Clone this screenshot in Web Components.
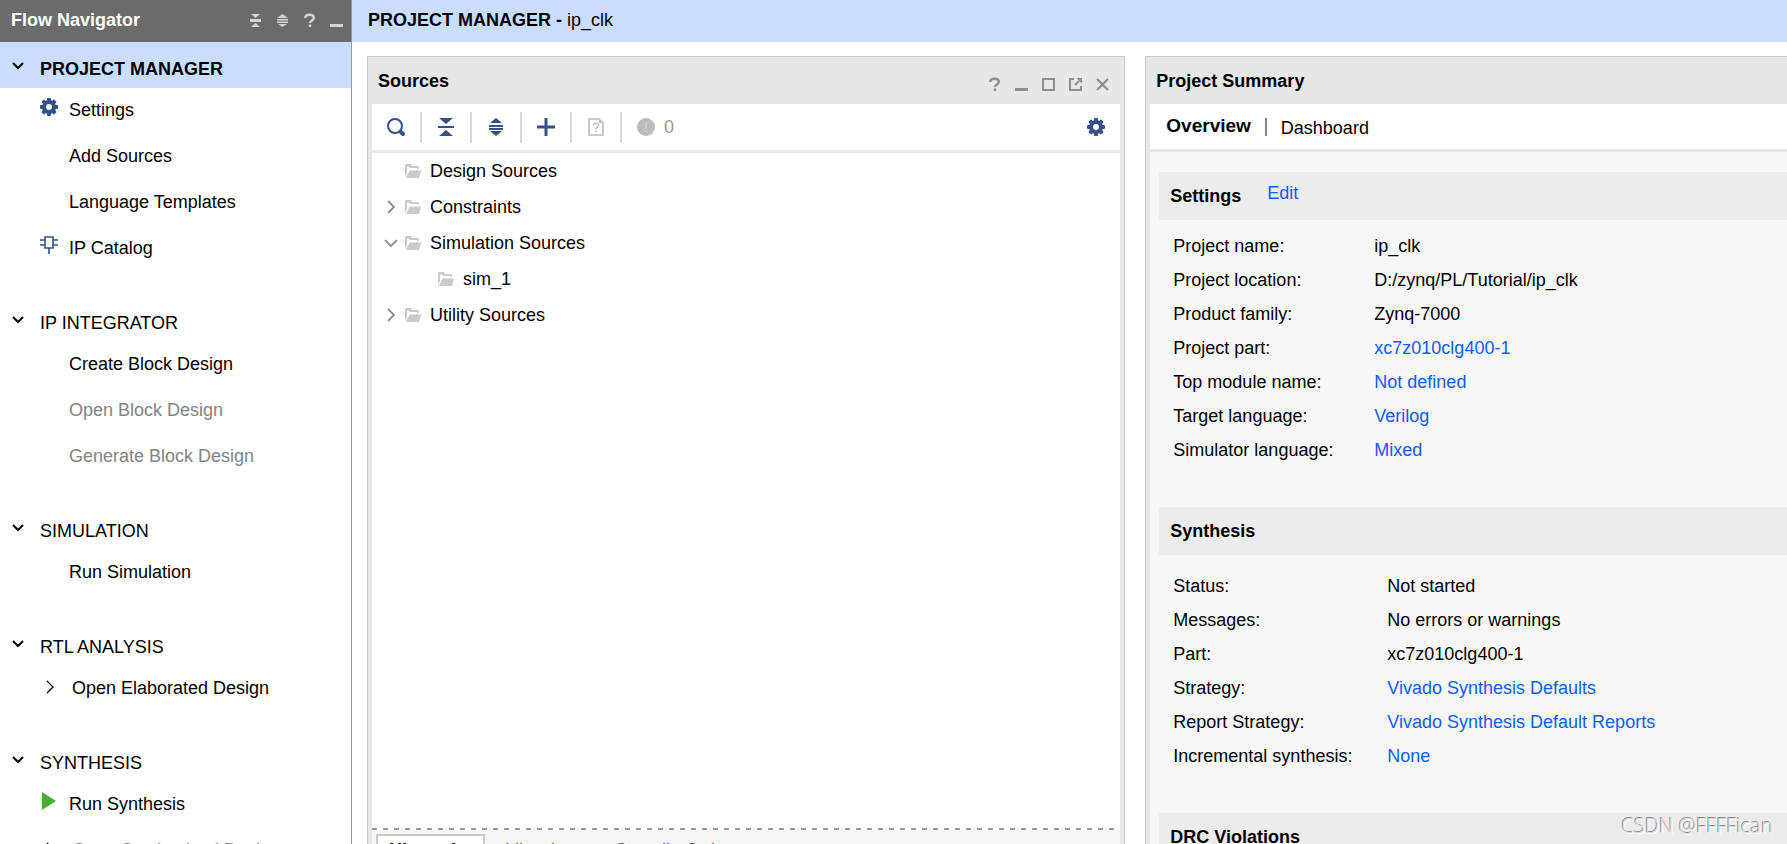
<!DOCTYPE html>
<html lang="en">
<head>
<meta charset="utf-8">
<meta name="viewport" content="width=device-width, initial-scale=1">
<title>ip_clk - Project Manager</title>
<style>
    html, body {
        margin: 0;
        height: 100%;
        overflow: hidden;
        background: #ffffff;
        color: #000000;
        font-family: "Liberation Sans", Arial, sans-serif;
        font-size: 18px;
        line-height: 22px;
    }
</style>
</head>
<body>

<ide-app></ide-app>

<script>
// ╔══════════════════════════════════════════════════════════╗
// ║                          ICONS                           ║
// ╚══════════════════════════════════════════════════════════╝
const teeth = [0, 45, 90, 135, 180, 225, 270, 315]
    .map(a => `<rect x="7" y="0" width="4" height="5" rx="1" transform="rotate(${a} 9 9)"/>`)
    .join('');

const icons = {
    gear: [18, 18, `${teeth}<circle cx="9" cy="9" r="5" fill="none" stroke="currentColor" stroke-width="4"/>`],
    chip: [18, 18, `<path d="M5 1h8v11H5zM0 4h5M0 9h5M13 4h5M13 9h5M9 12v6" fill="none" stroke="currentColor" stroke-width="1.6"/>`],
    play: [18, 18, `<path d="M2 0l14 9-14 9z"/>`],
    down: [12, 8, `<path d="M1 1l5 5 5-5" fill="none" stroke="currentColor" stroke-width="2"/>`],
    downThin: [14, 8, `<path d="M1 1l6 6 6-6" fill="none" stroke="currentColor" stroke-width="1.8"/>`],
    right: [18, 14, `<path d="M7 1l6 6-6 6" fill="none" stroke="currentColor" stroke-width="1.3"/>`],
    rightThin: [14, 14, `<path d="M4 1l6 6-6 6" fill="none" stroke="currentColor" stroke-width="1.8"/>`],
    collapse: [16, 18, `<path d="M1 0h14L8 6zM0 8h16v2H0zM1 18h14L8 12z"/>`],
    expand: [16, 18, `<path d="M2 5l6-5 6 5zM1 7h14v2H1zM1 10h14v2H1zM2 13l6 5 6-5z"/>`],
    collapseSmall: [13, 15, `<path d="M2 1h9L6.5 5zM1 6h11v3H1zM2 14h9l-4.5-4z"/>`],
    expandSmall: [13, 15, `<path d="M1 5l5.5-4L12 5zM1 6h11v1.5H1zM1 8.5h11V10H1zM2 11l4.5 3L11 11z"/>`],
    help: [13, 15, `<path d="M2.2 5C2.2 2.600 4 1.800 6.500 1.800S10.800 3 10.800 5c0 2.500-3.800 2.300-3.800 5" fill="none" stroke="currentColor" stroke-width="2.4"/><path d="M5.700 11.500h2.600V14H5.700z"/>`],
    minimize: [13, 15, `<path d="M0 11h13v3H0z"/>`],
    maximize: [13, 15, `<path d="M1 2h11v11H1z" fill="none" stroke="currentColor" stroke-width="2"/>`],
    popout: [13, 15, `<path d="M5 2H1v11h11V9M6 8l4-4" fill="none" stroke="currentColor" stroke-width="2"/><path d="M7.500 1H13v5.500z"/>`],
    close: [13, 15, `<path d="M1 2l11 11M12 2L1 13" fill="none" stroke="currentColor" stroke-width="2.2"/>`],
    search: [18, 18, `<circle cx="8" cy="8" r="7" fill="none" stroke="currentColor" stroke-width="2"/><path d="M14 14l2 2" stroke="currentColor" stroke-width="4" stroke-linecap="round"/>`],
    plus: [18, 18, `<path d="M0 7.500h18v3H0zM7.500 0h3v18h-3z"/>`],
    fileHelp: [16, 18, `<path d="M1 1h10l4 4v12H1z" fill="none" stroke="currentColor" stroke-width="1.6"/><path d="M11 1v4h4z"/><path d="M5.500 7.500C5.500 5.800 6.500 5.200 8 5.200s2.600.8 2.600 2.100c0 1.600-2.600 1.700-2.600 4" fill="none" stroke="currentColor" stroke-width="1.5"/><path d="M7.200 12.500h1.700v1.700H7.200z"/>`],
    alert: [18, 18, `<circle cx="9" cy="9" r="9"/><path d="M8 4h2v7H8zM8 12h2v2H8z" fill="#cdcdcd"/>`],
    folder: [16, 14, `<path d="M0 13V1l1-1h5l1 2h7v3h-1.500V4H5L4 2.500H2V9z"/><path d="M4.500 6.500H16L14 14H1z"/>`]
};

class IdeIcon extends HTMLElement {
    constructor() {
        super();
        this.attachShadow({ mode: "open" });
    }

    connectedCallback() {
        const [w, h, shape] = icons[this.getAttribute("name")];
        this.shadowRoot.innerHTML = /* html */`
            <style>
                :host { display: inline-flex; flex: none; }
                svg { display: block; fill: currentColor; }
            </style>
            <svg width="${w}" height="${h}" viewBox="0 0 ${w} ${h}" aria-hidden="true">${shape}</svg>
        `;
    }
}
customElements.define("ide-icon", IdeIcon);


// ╔══════════════════════════════════════════════════════════╗
// ║                       ICON BUTTON                        ║
// ╚══════════════════════════════════════════════════════════╝
class IconButton extends HTMLElement {
    constructor() {
        super();
        this.attachShadow({ mode: "open" });
    }

    connectedCallback() {
        this.shadowRoot.innerHTML = /* html */`
            <style>
                :host { display: flex; }
                button {
                    display: flex;
                    flex: 1;
                    align-items: center;
                    justify-content: center;
                    padding: 0;
                    border: 0;
                    background: none;
                    color: inherit;
                    font: inherit;
                }
            </style>
            <button type="button" aria-label="${this.getAttribute("label")}">
                <ide-icon name="${this.getAttribute("icon")}"></ide-icon>
            </button>
        `;
    }
}
customElements.define("icon-button", IconButton);


// ╔══════════════════════════════════════════════════════════╗
// ║                     FLOW NAVIGATOR                       ║
// ╚══════════════════════════════════════════════════════════╝
class FlowItem extends HTMLElement {
    constructor() {
        super();
        this.attachShadow({ mode: "open" });
    }

    connectedCallback() {
        const icon = this.getAttribute("icon");
        this.shadowRoot.innerHTML = /* html */`
            <style>
                :host { display: block; }
                button {
                    display: flex;
                    align-items: center;
                    gap: 11px;
                    box-sizing: border-box;
                    width: 100%;
                    height: 46px;
                    padding: 0 0 2px 40px;
                    border: 0;
                    background: none;
                    color: inherit;
                    font: inherit;
                    text-align: left;
                    white-space: nowrap;
                }
                button:disabled { color: #848484; }
                .icon { display: flex; width: 18px; padding-bottom: 6px; color: #34508a; }
                :host([icon="play"]) .icon { color: #43b02a; }
                :host([icon="right"]) button { gap: 14px; }
                :host([icon="right"]) .icon { padding-bottom: 2px; color: #000000; }
            </style>
            <button type="button" ${this.hasAttribute("disabled") ? "disabled" : ""}>
                <span class="icon">${icon ? `<ide-icon name="${icon}"></ide-icon>` : ""}</span>
                <slot></slot>
            </button>
        `;
    }
}
customElements.define("flow-item", FlowItem);

class FlowSection extends HTMLElement {
    constructor() {
        super();
        this.attachShadow({ mode: "open" });
        this.shadowRoot.innerHTML = /* html */`
            <style>
                :host { display: block; padding-bottom: 24px; }
                h2 { margin: 0; font: inherit; }
                button {
                    display: flex;
                    align-items: center;
                    gap: 16px;
                    box-sizing: border-box;
                    width: 100%;
                    height: 46px;
                    padding: 8px 0 0 12px;
                    border: 0;
                    background: none;
                    color: inherit;
                    font: inherit;
                    text-align: left;
                }
                ide-icon { padding-bottom: 6px; }
                :host([active]) button { background: #cbddff; font-weight: bold; }
            </style>
            <h2><button type="button" aria-expanded="true"><ide-icon name="down"></ide-icon>${this.getAttribute("heading")}</button></h2>
            <slot></slot>
        `;
    }
}
customElements.define("flow-section", FlowSection);

class FlowNavigator extends HTMLElement {
    constructor() {
        super();
        this.attachShadow({ mode: "open" });
        this.shadowRoot.innerHTML = /* html */`
            <style>
                :host {
                    display: block;
                    border-right: 1px solid #999999;
                    background: #ffffff;
                }
                header {
                    display: flex;
                    align-items: center;
                    box-sizing: border-box;
                    height: 42px;
                    padding: 0 1px 2px 11px;
                    background: #6b6b6b;
                    color: #ffffff;
                }
                h1 { flex: 1; margin: 0; font-size: 18px; }
                icon-button { width: 27px; color: #d4d4d4; }
            </style>
            <header>
                <h1>Flow Navigator</h1>
                <icon-button icon="collapseSmall" label="Collapse all"></icon-button>
                <icon-button icon="expandSmall" label="Expand all"></icon-button>
                <icon-button icon="help" label="Help"></icon-button>
                <icon-button icon="minimize" label="Minimize"></icon-button>
            </header>
            <nav>
                <flow-section heading="PROJECT MANAGER" active>
                    <flow-item icon="gear">Settings</flow-item>
                    <flow-item>Add Sources</flow-item>
                    <flow-item>Language Templates</flow-item>
                    <flow-item icon="chip">IP Catalog</flow-item>
                </flow-section>
                <flow-section heading="IP INTEGRATOR">
                    <flow-item>Create Block Design</flow-item>
                    <flow-item disabled>Open Block Design</flow-item>
                    <flow-item disabled>Generate Block Design</flow-item>
                </flow-section>
                <flow-section heading="SIMULATION">
                    <flow-item>Run Simulation</flow-item>
                </flow-section>
                <flow-section heading="RTL ANALYSIS">
                    <flow-item icon="right">Open Elaborated Design</flow-item>
                </flow-section>
                <flow-section heading="SYNTHESIS">
                    <flow-item icon="play">Run Synthesis</flow-item>
                    <flow-item icon="right" disabled>Open Synthesized Design</flow-item>
                </flow-section>
            </nav>
        `;
    }
}
customElements.define("flow-navigator", FlowNavigator);


// ╔══════════════════════════════════════════════════════════╗
// ║                       DOCKED PANEL                       ║
// ╚══════════════════════════════════════════════════════════╝
class DockPanel extends HTMLElement {
    constructor() {
        super();
        this.attachShadow({ mode: "open" });
        this.shadowRoot.innerHTML = /* html */`
            <style>
                :host {
                    display: flex;
                    flex-direction: column;
                    min-width: 0;
                    padding: 0 4px 4px;
                    border: 1px solid #cacaca;
                    background: #e7e7e7;
                }
                header {
                    display: flex;
                    align-items: center;
                    flex: none;
                    height: 47px;
                    padding: 0 4px 0 6px;
                }
                h2 { flex: 1; margin: 0; font-size: 18px; white-space: nowrap; }
                .actions { display: flex; padding-top: 8px; color: #8e8e8e; }
                ::slotted(icon-button) { width: 27px; }
                .body { display: flex; flex: 1; flex-direction: column; min-height: 0; }
            </style>
            <header>
                <h2>${this.getAttribute("heading")}</h2>
                <div class="actions"><slot name="actions"></slot></div>
            </header>
            <div class="body"><slot></slot></div>
        `;
    }
}
customElements.define("dock-panel", DockPanel);


// ╔══════════════════════════════════════════════════════════╗
// ║                         SOURCES                          ║
// ╚══════════════════════════════════════════════════════════╝
class TreeRow extends HTMLElement {
    constructor() {
        super();
        this.attachShadow({ mode: "open" });
        const twisty = this.getAttribute("twisty");
        this.shadowRoot.innerHTML = /* html */`
            <style>
                :host {
                    display: flex;
                    align-items: center;
                    height: 36px;
                    padding-left: 12px;
                }
                :host([nested]) { padding-left: 45px; }
                .twisty { display: flex; width: 14px; margin-right: 7px; color: #8e8e8e; }
                .folder { margin-right: 9px; color: #cbcbcb; }
            </style>
            <span class="twisty">${twisty ? `<ide-icon name="${twisty}"></ide-icon>` : ""}</span>
            <ide-icon class="folder" name="folder"></ide-icon>
            <slot></slot>
        `;
    }

    connectedCallback() {
        this.setAttribute("role", "treeitem");
    }
}
customElements.define("tree-row", TreeRow);

class SourcesView extends HTMLElement {
    constructor() {
        super();
        this.attachShadow({ mode: "open" });
        this.shadowRoot.innerHTML = /* html */`
            <style>
                :host { display: flex; flex: 1; flex-direction: column; min-height: 0; }
                .toolbar {
                    display: flex;
                    align-items: center;
                    height: 46px;
                    border-bottom: 3px solid #e7e7e7;
                    background: #ffffff;
                    color: #34508a;
                }
                .toolbar icon-button { width: 48px; height: 31px; }
                .toolbar .ruled { border-right: 2px solid #dadada; }
                .toolbar .muted { color: #bcbcbc; }
                .count {
                    display: flex;
                    flex: 1;
                    align-items: center;
                    gap: 9px;
                    padding-left: 15px;
                    color: #999999;
                }
                .tree { flex: 1; min-height: 0; overflow: hidden; background: #ffffff; }
                .rule {
                    height: 2px;
                    background: repeating-linear-gradient(to right, #999999 0 5px, #ffffff 5px 11px);
                }
                .tabs {
                    display: flex;
                    align-items: stretch;
                    height: 34px;
                    padding: 4px 4px 0;
                    background: #f6f6f6;
                }
                .tabs button {
                    padding: 0 20px 3px;
                    border: 0;
                    background: none;
                    color: #555555;
                    font: inherit;
                }
                .tabs button[aria-selected="true"] {
                    padding: 0 11px 3px;
                    border: 2px solid #cacaca;
                    background: #ffffff;
                    color: #000000;
                    font-weight: bold;
                }
            </style>
            <div class="toolbar">
                <icon-button class="ruled" icon="search" label="Search"></icon-button>
                <icon-button class="ruled" icon="collapse" label="Collapse all"></icon-button>
                <icon-button class="ruled" icon="expand" label="Expand all"></icon-button>
                <icon-button class="ruled" icon="plus" label="Add sources"></icon-button>
                <icon-button class="ruled muted" icon="fileHelp" label="Missing sources"></icon-button>
                <span class="count"><ide-icon class="muted" name="alert"></ide-icon>0</span>
                <icon-button icon="gear" label="Settings"></icon-button>
            </div>
            <div class="tree" role="tree">
                <tree-row>Design Sources</tree-row>
                <tree-row twisty="rightThin">Constraints</tree-row>
                <tree-row twisty="downThin">Simulation Sources</tree-row>
                <tree-row nested>sim_1</tree-row>
                <tree-row twisty="rightThin">Utility Sources</tree-row>
            </div>
            <div class="rule"></div>
            <div class="tabs" role="tablist">
                <button type="button" role="tab" aria-selected="true">Hierarchy</button>
                <button type="button" role="tab" aria-selected="false">Libraries</button>
                <button type="button" role="tab" aria-selected="false">Compile Order</button>
            </div>
        `;
    }
}
customElements.define("sources-view", SourcesView);


// ╔══════════════════════════════════════════════════════════╗
// ║                     PROJECT SUMMARY                      ║
// ╚══════════════════════════════════════════════════════════╝
class SummarySection extends HTMLElement {
    constructor() {
        super();
        this.attachShadow({ mode: "open" });
        this.shadowRoot.innerHTML = /* html */`
            <style>
                :host { display: block; padding-bottom: 40px; }
                header {
                    display: flex;
                    align-items: center;
                    gap: 26px;
                    height: 48px;
                    padding-left: 11px;
                    background: #ececec;
                }
                h3 { margin: 0; font-size: 18px; }
                ::slotted(a) { padding-bottom: 6px; color: #0f5bff; text-decoration: none; }
            </style>
            <header><h3>${this.getAttribute("heading")}</h3><slot name="action"></slot></header>
            <slot></slot>
        `;
    }
}
customElements.define("summary-section", SummarySection);

class SummaryView extends HTMLElement {
    constructor() {
        super();
        this.attachShadow({ mode: "open" });
        this.shadowRoot.innerHTML = /* html */`
            <style>
                :host { display: flex; flex: 1; flex-direction: column; min-height: 0; }
                .tabs {
                    display: flex;
                    align-items: center;
                    height: 45px;
                    padding-left: 16px;
                    border-bottom: 3px solid #e7e7e7;
                    background: #ffffff;
                }
                .tabs button {
                    padding: 3px 0 0;
                    border: 0;
                    background: none;
                    color: inherit;
                    font: inherit;
                }
                .tabs button[aria-selected="true"] { padding: 0 0 2px; font-size: 19px; font-weight: bold; }
                .divider { width: 2px; height: 18px; margin: 0 14px; background: #7f8787; }
                .content {
                    flex: 1;
                    min-height: 0;
                    padding: 20px 0 0 9px;
                    overflow: hidden;
                    background: #f7f7f7;
                }
                table { margin: 9px 0 0 14px; border-spacing: 0; }
                table.loose { margin-top: 14px; }
                th, td { height: 34px; padding: 0; font-weight: normal; text-align: left; white-space: nowrap; }
                th { min-width: 201px; }
                .loose th { min-width: 214px; }
                a { color: #0f5bff; text-decoration: none; }
            </style>
            <div class="tabs" role="tablist">
                <button type="button" role="tab" aria-selected="true">Overview</button>
                <span class="divider"></span>
                <button type="button" role="tab" aria-selected="false">Dashboard</button>
            </div>
            <div class="content">
                <summary-section heading="Settings">
                    <a slot="action" href="#edit">Edit</a>
                    <table>
                        <tr><th scope="row">Project name:</th><td>ip_clk</td></tr>
                        <tr><th scope="row">Project location:</th><td>D:/zynq/PL/Tutorial/ip_clk</td></tr>
                        <tr><th scope="row">Product family:</th><td>Zynq-7000</td></tr>
                        <tr><th scope="row">Project part:</th><td><a href="#part">xc7z010clg400-1</a></td></tr>
                        <tr><th scope="row">Top module name:</th><td><a href="#top">Not defined</a></td></tr>
                        <tr><th scope="row">Target language:</th><td><a href="#target">Verilog</a></td></tr>
                        <tr><th scope="row">Simulator language:</th><td><a href="#simulator">Mixed</a></td></tr>
                    </table>
                </summary-section>
                <summary-section heading="Synthesis">
                    <table class="loose">
                        <tr><th scope="row">Status:</th><td>Not started</td></tr>
                        <tr><th scope="row">Messages:</th><td>No errors or warnings</td></tr>
                        <tr><th scope="row">Part:</th><td>xc7z010clg400-1</td></tr>
                        <tr><th scope="row">Strategy:</th><td><a href="#strategy">Vivado Synthesis Defaults</a></td></tr>
                        <tr><th scope="row">Report Strategy:</th><td><a href="#reports">Vivado Synthesis Default Reports</a></td></tr>
                        <tr><th scope="row">Incremental synthesis:</th><td><a href="#incremental">None</a></td></tr>
                    </table>
                </summary-section>
                <summary-section heading="DRC Violations"></summary-section>
            </div>
        `;
    }
}
customElements.define("summary-view", SummaryView);


// ╔══════════════════════════════════════════════════════════╗
// ║                           APP                            ║
// ╚══════════════════════════════════════════════════════════╝
class IdeApp extends HTMLElement {
    constructor() {
        super();
        this.attachShadow({ mode: "open" });
        this.shadowRoot.innerHTML = /* html */`
            <style>
                /* The window is a little taller than the viewport, its foot is cut off */
                :host {
                    display: grid;
                    grid-template-columns: 352px 1fr;
                    grid-template-rows: minmax(0, 1fr);
                    height: calc(100vh + 40px);
                }
                flow-navigator { min-height: 0; overflow: hidden; }
                main { display: flex; flex-direction: column; min-width: 0; min-height: 0; }
                .title {
                    box-sizing: border-box;
                    height: 42px;
                    padding: 9px 16px;
                    background: #cbddff;
                }
                .panels {
                    display: grid;
                    flex: 1;
                    grid-template-columns: 13fr 11fr;
                    grid-template-rows: minmax(0, 1fr);
                    gap: 20px;
                    min-height: 0;
                    padding: 14px 0 11px 15px;
                }
                .summary { border-right: 0; padding-right: 0; }
                .watermark {
                    position: absolute;
                    right: 14px;
                    bottom: 6px;
                    color: #dcdcdc;
                    font-family: "Open Sans", "Noto Sans", sans-serif;
                    font-size: 20px;
                    font-weight: 300;
                    line-height: 24px;
                    text-shadow: -1px -1px 0 #8a8a8a, 1px 1px 0 #ffffff;
                }
            </style>
            <flow-navigator></flow-navigator>
            <main>
                <div class="title"><b>PROJECT MANAGER - </b>ip_clk</div>
                <div class="panels">
                    <dock-panel heading="Sources">
                        <icon-button slot="actions" icon="help" label="Help"></icon-button>
                        <icon-button slot="actions" icon="minimize" label="Minimize"></icon-button>
                        <icon-button slot="actions" icon="maximize" label="Maximize"></icon-button>
                        <icon-button slot="actions" icon="popout" label="Float"></icon-button>
                        <icon-button slot="actions" icon="close" label="Close"></icon-button>
                        <sources-view></sources-view>
                    </dock-panel>
                    <dock-panel class="summary" heading="Project Summary">
                        <summary-view></summary-view>
                    </dock-panel>
                </div>
            </main>
            <div class="watermark">CSDN @FFFFican</div>
        `;
    }
}
customElements.define("ide-app", IdeApp);
</script>
</body>
</html>
